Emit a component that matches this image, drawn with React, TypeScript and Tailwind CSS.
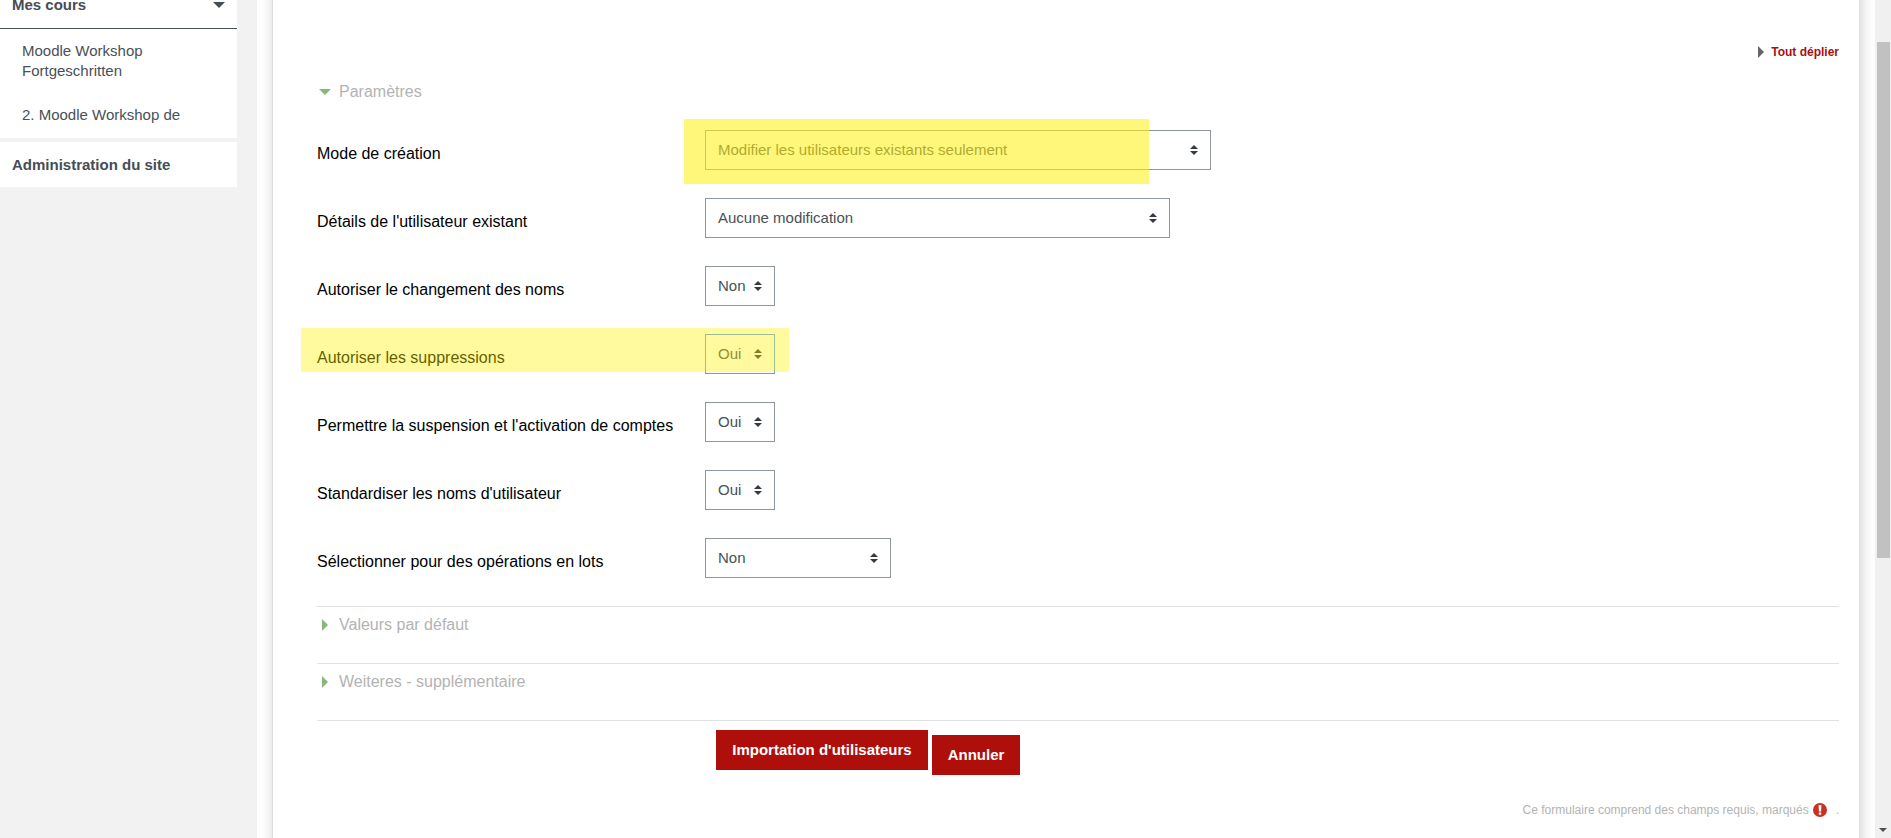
import React, { useState } from 'react';
import clsx from 'clsx';

interface Field {
  id: string;
  label: string;
  value: string;
  options: string[];
  width: string;
  focused?: boolean;
  marker?: string;
}

const YES_NO = ['Non', 'Oui'];

const FIELDS: Field[] = [
  {
    id: 'uutype',
    label: 'Mode de création',
    value: 'Modifier les utilisateurs existants seulement',
    options: ['Modifier les utilisateurs existants seulement'],
    width: 'w-[506px]',
    marker: 'left-[367px] -top-[11px] w-[465px] h-[65px] bg-[rgba(255,241,18,0.56)]',
  },
  {
    id: 'uuupdatetype',
    label: "Détails de l'utilisateur existant",
    value: 'Aucune modification',
    options: ['Aucune modification'],
    width: 'w-[465px]',
  },
  { id: 'uuallowrenames', label: 'Autoriser le changement des noms', value: 'Non', options: YES_NO, width: 'w-[70px]' },
  {
    id: 'uuallowdeletes',
    label: 'Autoriser les suppressions',
    value: 'Oui',
    options: YES_NO,
    width: 'w-[70px]',
    focused: true,
    marker: '-left-4 -top-[6px] w-[488px] h-[44px] bg-[rgba(255,241,0,0.38)]',
  },
  { id: 'uuallowsuspends', label: "Permettre la suspension et l'activation de comptes", value: 'Oui', options: YES_NO, width: 'w-[70px]' },
  { id: 'uustandardusernames', label: "Standardiser les noms d'utilisateur", value: 'Oui', options: YES_NO, width: 'w-[70px]' },
  { id: 'uubulk', label: 'Sélectionner pour des opérations en lots', value: 'Non', options: YES_NO, width: 'w-[186px]' },
];

function CaretDown({ className }: { className?: string }) {
  return (
    <svg viewBox="0 0 12 6" className={clsx('w-3 h-[6px] fill-current', className)} aria-hidden="true">
      <path d="M0 0h12L6 6z" />
    </svg>
  );
}

function CaretRight({ className }: { className?: string }) {
  return (
    <svg viewBox="0 0 6 12" className={clsx('w-[6px] h-3 fill-current', className)} aria-hidden="true">
      <path d="M0 0v12l6-6z" />
    </svg>
  );
}

function SelectRow({ field }: { field: Field }) {
  const [value, setValue] = useState(field.value);

  return (
    <div className="relative flex h-10">
      <label htmlFor={field.id} className="w-[388px] shrink-0 pt-3 text-base leading-6 text-black">
        {field.label}
      </label>
      <div className={clsx('relative', field.width)}>
        <select
          id={field.id}
          value={value}
          onChange={(e) => setValue(e.target.value)}
          className={clsx(
            'block w-full h-10 appearance-none border bg-white pl-3 pr-5 text-[15px] leading-5 text-[#495057] focus:outline-none',
            field.focused ? 'border-[#5b9fec]' : 'border-[#8f959e]'
          )}
        >
          {field.options.map((o) => (
            <option key={o}>{o}</option>
          ))}
        </select>
        <svg viewBox="0 0 4 5" className="absolute right-[13px] top-[15px] w-2 h-[10px] fill-[#343a40] pointer-events-none" aria-hidden="true">
          <path d="M2 0L0 2h4zm0 5L0 3h4z" />
        </svg>
      </div>
      {field.marker && <div className={clsx('absolute pointer-events-none', field.marker)} />}
    </div>
  );
}

function CollapsedSection({ title }: { title: string }) {
  return (
    <section className="h-[57px] border-t border-[#dee2e6] pt-[6px]">
      <button type="button" className="flex items-center h-6 pl-[5px] text-base text-[#b3b3b3]">
        <CaretRight className="mr-[11px] text-[#86b87a]" />
        {title}
      </button>
    </section>
  );
}

function Sidebar() {
  return (
    <nav className="w-[257px] shrink-0 bg-[#f2f2f2] pr-5 text-[15px] leading-5 text-[#495057]">
      <div className="bg-white">
        <div className="flex justify-between h-[29px] border-b border-[#495057] pl-3 pr-3 text-[#454d55]">
          <span className="font-bold leading-[10px]">Mes cours</span>
          <CaretDown className="mt-[2px]" />
        </div>
        <ul className="pl-[22px] pr-10">
          <li className="pt-3">
            <a href="#">Moodle Workshop Fortgeschritten</a>
          </li>
          <li className="pt-6 pb-[13px]">
            <a href="#">2. Moodle Workshop de</a>
          </li>
        </ul>
      </div>
      <a href="#" className="mt-1 flex items-center h-[45px] bg-white pl-3 font-bold text-[#454d55]">
        Administration du site
      </a>
    </nav>
  );
}

export default function App() {
  return (
    <div className="flex h-screen overflow-hidden bg-white font-['Liberation_Sans',Arial,sans-serif]">
      <Sidebar />

      <main className="flex-1 pl-[15px] pr-4 overflow-hidden">
        {/* card runs past the viewport at both ends so its side shadow stays even */}
        <div className="-mt-4 h-[calc(100%+2rem)] border-l border-[#dcdcdc] bg-white pl-11 pr-5 pt-4 shadow-[2px_0_14px_rgba(0,0,0,0.2)]">
          <div className="flex justify-end pt-[42px]">
            <a href="#" className="flex items-center h-5 text-xs font-bold text-[#a80f0f]">
              <CaretRight className="mr-[7px] text-[#666]" />
              Tout déplier
            </a>
          </div>

          <form onSubmit={(e) => e.preventDefault()}>
            <button type="button" className="mt-[18px] flex items-center h-6 pl-[2px] text-base text-[#b3b3b3]">
              <CaretDown className="mr-2 text-[#86b87a]" />
              Paramètres
            </button>

            <div className="mt-[26px] mb-7 flex flex-col gap-7">
              {FIELDS.map((f) => (
                <SelectRow key={f.id} field={f} />
              ))}
            </div>

            <CollapsedSection title="Valeurs par défaut" />
            <CollapsedSection title="Weiteres - supplémentaire" />

            <div className="flex items-start gap-1 border-t border-[#dee2e6] pl-[399px] pt-[9px] text-[15px] font-bold text-white">
              <button type="submit" className="h-10 w-[212px] bg-[#ae0f0a] pt-px">
                Importation d'utilisateurs
              </button>
              <button type="button" className="mt-[5px] h-10 w-[88px] bg-[#ae0f0a] pt-px">
                Annuler
              </button>
            </div>

            <p className="mt-[25px] flex items-center justify-end h-5 text-xs text-[#b3b3b3]">
              Ce formulaire comprend des champs requis, marqués
              <svg viewBox="0 0 14 14" className="ml-1 mr-[9px] w-[14px] h-[14px]" role="img" aria-label="Requis">
                <circle cx="7" cy="7" r="7" fill="#ca3120" />
                <path d="M5.6 2h2.8L8.1 8.4H5.9zM5.8 9.4h2.4v2.3H5.8z" fill="#fff" />
              </svg>
              .
            </p>
          </form>
        </div>
      </main>

      {/* scroll track */}
      <div className="flex flex-col items-center w-4 shrink-0 bg-[#f0f0f0] pt-[42px] pb-[6px]">
        <div className="w-[13px] h-[516px] bg-[#c1c1c1]" />
        <svg viewBox="0 0 8 4" className="mt-auto w-2 h-1 fill-[#505050]" aria-hidden="true">
          <path d="M0 0h8L4 4z" />
        </svg>
      </div>
    </div>
  );
}
